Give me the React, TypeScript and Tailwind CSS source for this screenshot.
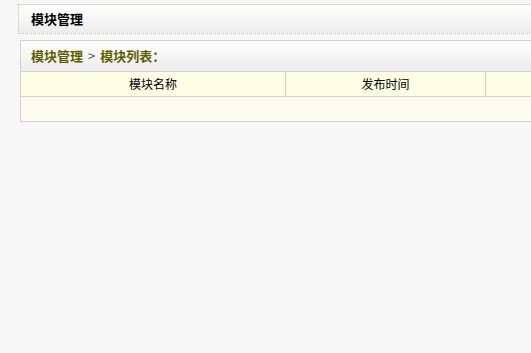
export default function App() {
  return (
    <div className="w-[531px] h-[353px] overflow-hidden bg-[#f7f7f7] font-['Noto_Sans_CJK_SC',sans-serif] text-[12px] text-black">
      <div className="w-[700px] pt-[4px] pl-[18px]">
        <div className="h-[30px] border border-dotted border-[#c9c9ad] bg-gradient-to-b from-white to-[#ececec] flex items-center pl-[12px]">
          <span className="font-bold text-[13px]">模块管理</span>
        </div>

        <div className="mt-[6px] ml-[2px] border border-[#d3d3cb] bg-[#fbfbef]">
          <div className="h-[31px] bg-gradient-to-b from-white to-[#ebebeb] flex items-center pl-[10px] font-bold text-[13px] text-[#5f5f00] border-b border-[#d3d3cb]">
            模块管理 <span className="mx-[5px] font-normal text-[#555]">&gt;</span> 模块列表：
          </div>
          <div className="flex h-[25px] bg-[#fdfde3] border-b border-[#d3d3cb]">
            <div className="w-[265px] border-r border-[#cfcfc5] flex items-center justify-center">模块名称</div>
            <div className="w-[200px] border-r border-[#cfcfc5] flex items-center justify-center">发布时间</div>
            <div className="flex-1"></div>
          </div>
          <div className="h-[24px] bg-[#fbfbef]"></div>
        </div>
      </div>
    </div>
  );
}
